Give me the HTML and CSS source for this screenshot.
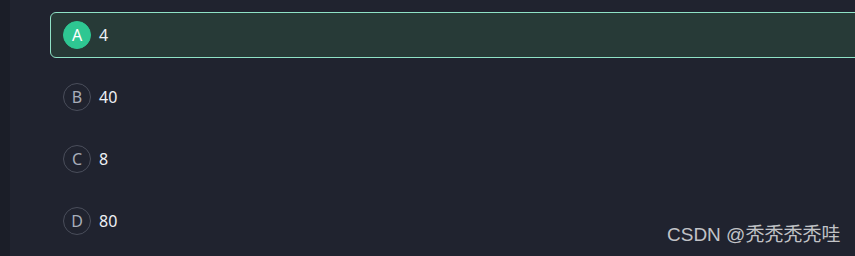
FILE: index.html
```html
<!DOCTYPE html>
<html lang="zh">
<head>
<meta charset="utf-8">
<link rel="stylesheet" href="styles.css">
</head>
<body>
<div class="page">
  <div class="sidebar"></div>
  <div class="main">
    <ul class="options">
      <li class="option selected"><span class="letter">A</span><span class="value">4</span></li>
      <li class="option"><span class="letter">B</span><span class="value">40</span></li>
      <li class="option"><span class="letter">C</span><span class="value">8</span></li>
      <li class="option"><span class="letter">D</span><span class="value">80</span></li>
    </ul>
  </div>
</div>
<div class="watermark">CSDN @秃秃秃秃哇</div>
</body>
</html>
```

FILE: styles.css
```css
html, body {
  margin: 0;
  padding: 0;
  width: 855px;
  height: 256px;
  overflow: hidden;
  background: #20232f;
}
.page {
  display: flex;
  height: 256px;
}
.sidebar {
  width: 10px;
  flex: none;
  background: #1b1e28;
}
.main {
  flex: 1;
  padding: 12px 0 0 40px;
  overflow: hidden;
}
.options {
  list-style: none;
  margin: 0;
  padding: 0;
  display: flex;
  flex-direction: column;
  gap: 16px;
}
.option {
  box-sizing: border-box;
  width: 840px;
  height: 46px;
  display: flex;
  align-items: center;
  gap: 8px;
  padding: 0 12px;
  border: 1px solid transparent;
  border-radius: 6px;
  font-family: "Noto Sans", "Open Sans", sans-serif;
  font-size: 16px;
  color: #eef0f5;
}
.option.selected {
  background: #273a37;
  border-color: #8fe2c6;
}
.value {
  line-height: 22px;
}
.letter {
  box-sizing: border-box;
  width: 28px;
  height: 28px;
  flex: none;
  border-radius: 50%;
  border: 1px solid #4a4e5b;
  display: flex;
  align-items: center;
  justify-content: center;
  color: #a8adb9;
  font-size: 16px;
  line-height: 1;
}
.selected .letter {
  background: #2ec792;
  border-color: #2ec792;
  color: #ffffff;
}
.watermark {
  position: absolute;
  left: 667px;
  top: 222px;
  font-family: "Liberation Sans", Arial, "Noto Sans CJK SC", sans-serif;
  font-size: 19px;
  line-height: 26px;
  color: #c2c3c7;
}
```
